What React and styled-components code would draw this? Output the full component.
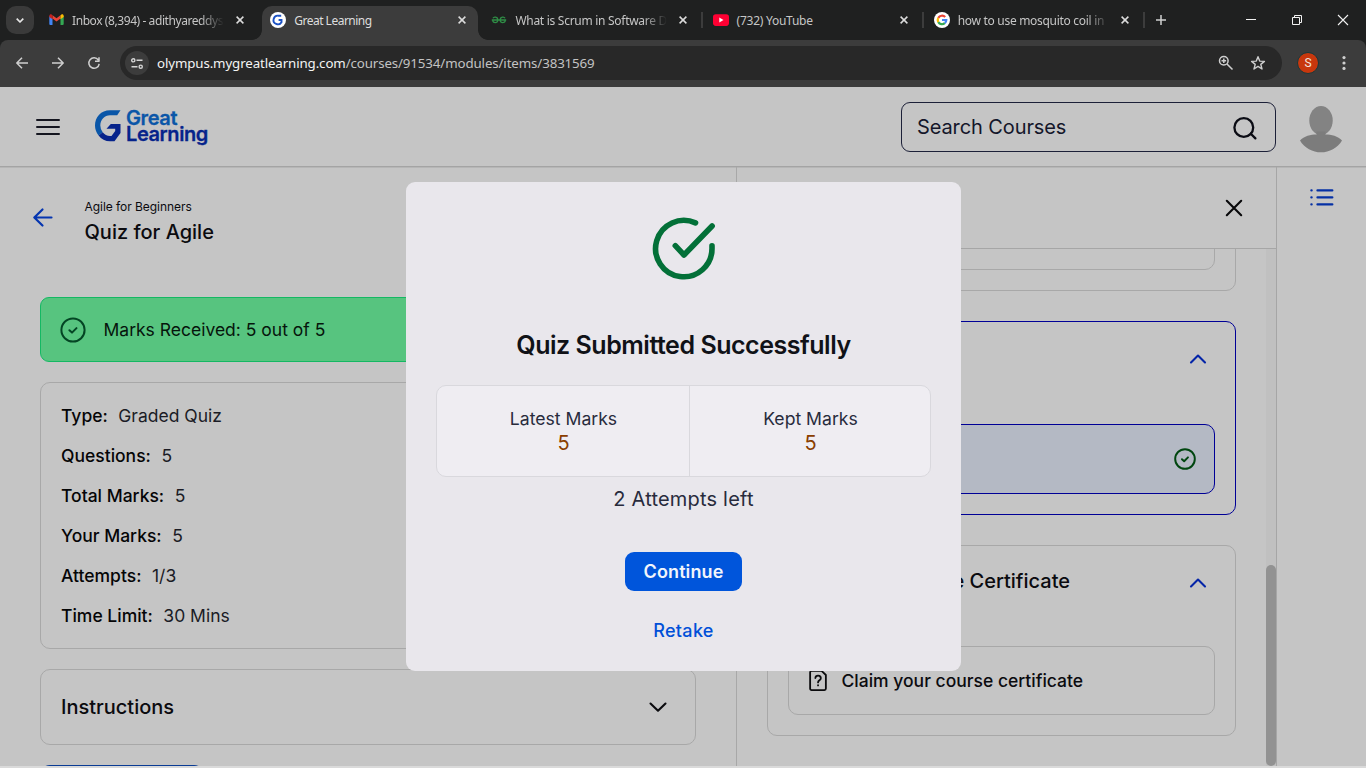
import React from "react";
import styled, { createGlobalStyle, css } from "styled-components";

const Global = createGlobalStyle`
  * { box-sizing: border-box; }
  html, body { margin: 0; width: 1366px; height: 768px; overflow: hidden; background: #c5c5c5; }
  body { font-family: Inter, "Liberation Sans", sans-serif; color: #0b0b0f; }
  svg { display: block; flex: none; overflow: visible; }
  button { font: inherit; border: 0; padding: 0; background: none; }
  p, h1, h2 { margin: 0; font-weight: inherit; }
`;

const Screen = styled.div`
  width: 1366px;
  height: 768px;
  display: flex;
  flex-direction: column;
  overflow: hidden;
  position: relative;
`;

/* ---------- browser chrome ---------- */

const TabStrip = styled.div`
  height: 40px;
  flex: none;
  display: flex;
  align-items: stretch;
  padding: 0 0 0 6px;
  background: #1f2020;
  font-family: "Noto Sans", "Open Sans", sans-serif;
`;

const TabSearch = styled.button`
  width: 28px;
  height: 28px;
  margin: 6px 7px 0 0;
  border-radius: 10px;
  background: #3a3a3a;
  display: flex;
  align-items: center;
  justify-content: center;
`;

const Tab = styled.div`
  position: relative;
  width: 221.2px;
  flex: none;
  display: flex;
  align-items: center;
  padding: 0 0 0 8px;
  ${(p) =>
    p.$active &&
    css`
      z-index: 0;
      &::before {
        content: "";
        position: absolute;
        z-index: -1;
        left: 0;
        top: 6px;
        width: 216px;
        height: 34px;
        border-radius: 10px 10px 0 0;
        background: #3c3c3c;
      }
      &::after {
        content: "";
        position: absolute;
        z-index: -1;
        left: -10px;
        bottom: 0;
        width: 236px;
        height: 10px;
        background: radial-gradient(circle at 0 0, transparent 9.5px, #3c3c3c 10.2px) left / 10px 10px no-repeat,
          radial-gradient(circle at 100% 0, transparent 9.5px, #3c3c3c 10.2px) right / 10px 10px no-repeat;
      }
    `}
`;

const TabTitle = styled.span`
  width: 151.5px;
  margin: 1px 0 0 8px;
  white-space: nowrap;
  font-size: 12px;
  line-height: 18px;
  letter-spacing: ${(p) => p.$ls || 0}px;
  color: ${(p) => (p.$active ? "#dedede" : "#c6c6c6")};
  ${(p) => p.$fade && "mask-image: linear-gradient(90deg, #000 128px, transparent 152px);"}
`;

const TabClose = styled.span`
  margin-left: 12px;
`;

const Separator = styled.span`
  width: 2px;
  height: 16px;
  margin-left: auto;
  margin-right: 2px;
  background: #3c3c3c;
`;

const NewTab = styled.button`
  width: 28px;
  display: flex;
  align-items: center;
  justify-content: center;
`;

const WindowControls = styled.div`
  margin-left: auto;
  display: flex;
`;

const WindowButton = styled.button`
  width: 46px;
  display: flex;
  align-items: center;
  justify-content: center;
`;

const ToolbarBack = styled.div`
  height: 47px;
  flex: none;
  background: #1f2020;
`;

const Toolbar = styled.div`
  height: 47px;
  display: flex;
  align-items: center;
  padding: 0 12px 1px 12px;
  border-radius: 8px 8px 0 0;
  background: #3c3c3c;
`;

const NavButton = styled.button`
  width: 20px;
  height: 20px;
  margin-right: 16px;
  display: flex;
  align-items: center;
  justify-content: center;
`;

const Omnibox = styled.div`
  width: 1162px;
  height: 34px;
  display: flex;
  align-items: center;
  padding: 0 16px 0 5px;
  border-radius: 17px;
  background: #282828;
`;

const SiteInfo = styled.span`
  width: 24px;
  height: 24px;
  border-radius: 50%;
  background: #3c3c3c;
  display: flex;
  align-items: center;
  justify-content: center;
`;

const Url = styled.span`
  flex: 1;
  margin-left: 8px;
  font: 13.3px/20px "Noto Sans", "Open Sans", sans-serif;
  letter-spacing: -0.115px;
  color: #c3c3c3;
  b { font-weight: 400; color: #f4f4f4; }
`;

const OmniIcons = styled.div`
  display: flex;
  gap: 16px;
`;

const Profile = styled.span`
  width: 22px;
  height: 22px;
  margin: 0 23px 0 15px;
  border-radius: 50%;
  border: 1px solid #17393c;
  background: #c8370d;
  color: #f4e4de;
  font: 12px/20px Roboto, sans-serif;
  text-align: center;
`;

/* ---------- site ---------- */

const SiteHeader = styled.header`
  height: 80px;
  flex: none;
  display: flex;
  align-items: center;
  padding: 1px 24px 0 36px;
  border-bottom: 1px solid #a4a4a4;
  box-shadow: 0 1px #b6b6b6;
`;

const Logo = styled.div`
  display: flex;
  margin: -2px 0 0 35px;
  align-items: flex-start;
`;

const LogoWords = styled.div`
  display: flex;
  flex-direction: column;
  margin-left: 4px;
  font-weight: 600;
  font-size: 20px;
  line-height: 16.5px;
  color: #06238b;
  letter-spacing: -0.4px;
  -webkit-text-stroke: 0.3px currentColor;
  span:first-child { color: #0a56a8; }
`;

const SearchBox = styled.div`
  width: 375px;
  height: 50px;
  margin-left: auto;
  padding: 0 18px 0 15px;
  display: flex;
  align-items: center;
  justify-content: space-between;
  border: 1px solid #1c2038;
  border-radius: 9px;
  font-size: 20px;
  letter-spacing: -0.1px;
  color: #14162a;
`;

const Avatar = styled.span`
  margin: 4px 0 0 24px;
`;

const Body = styled.div`
  height: 599px;
  flex: none;
  display: flex;
  overflow: hidden;
`;

const BottomEdge = styled.div`
  height: 2px;
  flex: none;
  background: #dadada;
`;

const Main = styled.main`
  width: 736px;
  padding: 0 40px;
`;

const PageHead = styled.div`
  height: 130px;
  display: flex;
  padding: 29px 0 0;
  margin-left: -7px;
`;

const BackArrow = styled.span`
  width: 20px;
  margin: 12px 31.5px 0 0;
`;

const Crumb = styled.p`
  margin-top: 1px;
  font-size: 12px;
  line-height: 20px;
  letter-spacing: -0.05px;
`;

const PageTitle = styled.h1`
  font-size: 20px;
  line-height: 30px;
  font-weight: 500;
`;

const Banner = styled.div`
  height: 65px;
  display: flex;
  align-items: center;
  gap: 17.5px;
  padding: 0 19px;
  border: 1px solid #14b863;
  border-radius: 9px;
  background: #57c47f;
  font-size: 17.5px;
  color: #06150c;
`;

const Card = styled.section`
  border: 1px solid ${(p) => (p.$blue ? "#000096" : "#a8a8a8")};
  border-radius: 10px;
`;

const InfoCard = styled(Card)`
  height: 267px;
  margin-top: 20px;
  padding: 12px 20px;
`;

const InfoRow = styled.div`
  height: 40px;
  display: flex;
  align-items: center;
  gap: 10.5px;
  font-size: 17.5px;
  color: #1b1c25;
  b { font-weight: 500; color: #050507; }
`;

const Accordion = styled(Card)`
  height: 76px;
  margin-top: 20px;
  padding: 0 28px 0 20px;
  display: flex;
  align-items: center;
  justify-content: space-between;
  font-size: 20px;
  font-weight: 500;
`;

const StartButton = styled.div`
  width: 164px;
  height: 40px;
  margin-top: 20px;
  border-radius: 10px;
  background: #0a3c94;
`;

const Sidebar = styled.aside`
  width: 540px;
  display: flex;
  flex-direction: column;
  border-left: 1px solid #a8a8a8;
`;

const SidebarHead = styled.div`
  height: 82px;
  flex: none;
  display: flex;
  justify-content: flex-end;
  padding: 33px 34px 0 0;
  border-bottom: 1px solid #a6a6a6;
`;

const SidebarScroll = styled.div`
  height: 517px;
  display: flex;
  overflow: hidden;
`;

const Modules = styled.div`
  width: 529px;
  padding: 0 30px 0 30px;
`;

const Module = styled(Card)`
  height: ${(p) => p.$h}px;
  margin-top: ${(p) => p.$mt}px;
  padding: 0 20px 20px;
  display: flex;
  flex-direction: column;
  justify-content: space-between;
`;

const ModuleHead = styled.div`
  display: flex;
  align-items: center;
  justify-content: space-between;
  height: 30px;
  margin-top: 22px;
  padding-right: 9px;
`;

const ModuleTitle = styled.h2`
  width: 282px;
  margin-top: -4px;
  text-align: right;
  font-size: 20px;
  line-height: 28px;
  font-weight: 500;
`;

const Item = styled(Card)`
  height: ${(p) => p.$h || 69}px;
  display: flex;
  align-items: center;
  padding: 0 18px 0 20px;
  gap: 14.5px;
  font-size: 17.5px;
  font-weight: 500;
  justify-content: ${(p) => (p.$blue ? "flex-end" : "flex-start")};
  background: ${(p) => (p.$blue ? "#b4b9c4" : "transparent")};
`;

const Track = styled.div`
  width: 10px;
  display: flex;
  align-items: flex-end;
  background: #c0c0c0;
`;

const Thumb = styled.div`
  width: 10px;
  height: 201px;
  border-radius: 5px;
  background: #929292;
`;

const Rail = styled.div`
  flex: 1;
  border-left: 1px solid #a6a6a6;
  padding: 21px 0 0 33px;
`;

/* ---------- dialog ---------- */

const Dialog = styled.div`
  position: absolute;
  left: 406px;
  top: 182px;
  width: 555px;
  height: 489px;
  padding: 35px 30px 0;
  display: flex;
  flex-direction: column;
  align-items: center;
  border-radius: 9px;
  background: #e9e7ec;
  color: #282b3c;
`;

const DialogTitle = styled.h2`
  margin-top: 46px;
  font-size: 25px;
  line-height: 38px;
  font-weight: 600;
  letter-spacing: -0.47px;
  color: #101217;
`;

const Marks = styled.div`
  width: 495px;
  height: 92px;
  margin-top: 21px;
  display: flex;
  border: 1px solid #d9d8dd;
  border-radius: 10px;
  background: #efedf2;
`;

const Mark = styled.div`
  width: ${(p) => p.$w}px;
  padding: 21px 0 0 1px;
  display: flex;
  flex-direction: column;
  align-items: center;
  font-size: 17.6px;
  line-height: 24px;
  & + & { border-left: 1px solid #d9d8dd; }
  strong { font-weight: 400; font-size: 20px; color: #8a3d00; }
`;

const Attempts = styled.p`
  margin-top: 7px;
  font-size: 20px;
  line-height: 30px;
  letter-spacing: 0.2px;
`;

const Continue = styled.button`
  width: 117px;
  height: 39px;
  margin-top: 38px;
  border-radius: 9px;
  background: #0055db;
  color: #f2f5fb;
  font-size: 18px;
  font-weight: 600;
  letter-spacing: 0.1px;
`;

const Retake = styled.button`
  margin-top: 26px;
  font-size: 18px;
  line-height: 28px;
  font-weight: 500;
  letter-spacing: 0.3px;
  color: #0050d8;
`;

/* ---------- drawings ---------- */

const Stroke = ({ w, h = w, d, color, sw = 2, cap = "round", children }) => (
  <svg width={w} height={h} viewBox={`0 0 ${w} ${h}`} fill="none" stroke={color} strokeWidth={sw} strokeLinecap={cap} strokeLinejoin="round">
    {d && <path d={d} />}
    {children}
  </svg>
);

const CloseMark = () => (
  <TabClose>
    <Stroke w={8} d="M.6.6 7.4 7.4M7.4.6.6 7.4" color="#dcdcdc" sw={1.5} cap="butt" />
  </TabClose>
);

const GmailIcon = () => (
  <svg width="15" height="16" viewBox="0 0 15 16">
    <path d="M.3 4v8.1c0 .5.4.9.9.9h2.3V6.2z" fill="#4285f4" />
    <path d="M11.5 6.2V13h2.3c.5 0 .9-.4.9-.9V4z" fill="#34a853" />
    <path d="M3.5 6.5V3.2l4 3 4-3v3.3l-4 3z" fill="#ea4335" />
    <path d="M.3 4v1l3.2 2.3V3.2l-.7-.5C1.7 1.9.3 2.6.3 4z" fill="#c5221f" />
    <path d="M14.7 4v1l-3.2 2.3V3.2l.7-.5c1.1-.8 2.5-.1 2.5 1.3z" fill="#fbbc04" />
  </svg>
);

const GLIcon = () => (
  <svg width="16" height="16" viewBox="0 0 16 16">
    <circle cx="8" cy="8" r="8" fill="#fff" />
    <path d="M11.2 3.7H8.3a4.3 4.3 0 1 0 3.2 6.5V8H8.6" fill="none" stroke="#1c52c4" strokeWidth="1.9" />
  </svg>
);

const GfgIcon = () => (
  <svg width="16" height="16" viewBox="0 0 16 16" fill="none" stroke="#2f8d46" strokeWidth="1.3">
    <path d="M.8 8h14.4M2 6.2C2.7 4.6 6.8 4.3 6.8 8S2 11.5 1.6 8M14 6.2C13.3 4.6 9.2 4.3 9.2 8s4.8 3.5 5.2 0" />
  </svg>
);

const YoutubeIcon = () => (
  <svg width="16" height="16" viewBox="0 0 16 16">
    <rect y="2.3" width="16" height="11.6" rx="2.8" fill="#ff0033" />
    <path d="M6.3 5.6v5l4.2-2.5z" fill="#fff" />
  </svg>
);

const GoogleIcon = () => (
  <svg width="16" height="16" viewBox="0 0 16 16" fill="none" strokeWidth="2.2">
    <circle cx="8" cy="8" r="8" fill="#fff" />
    <path d="M4.3 5.9A4.3 4.3 0 0 1 11.2 5.1" stroke="#ea4335" />
    <path d="M4.3 10.1A4.3 4.3 0 0 1 4.3 5.9" stroke="#fbbc04" />
    <path d="M10.8 11.2A4.3 4.3 0 0 1 4.3 10.1" stroke="#34a853" />
    <path d="M8 8h4.3a4.3 4.3 0 0 1-1.5 3.2" stroke="#4285f4" />
  </svg>
);

const GreatLogo = () => (
  <svg width="27" height="32" viewBox="0 0 27 32">
    <path d="M25.5.2H15C6 .2 0 7 0 15.6c0 3.8 1.3 7.2 3.6 9.8l4.1-3.2A10.4 10.4 0 0 1 5.3 15.6C5.3 9.8 9.5 5.3 15 5.3h7.2z" fill="#0a56a8" />
    <path d="M3.6 25.4C6.3 29 10.4 31.2 15 31.2h4.5l6-8.2v-9H15.8l-4.3 4.8h8.7v2.3L16.5 26H15c-3 0-5.5-1.4-7.3-3.8z" fill="#06238b" />
  </svg>
);

const UserShape = () => (
  <svg width="42" height="47" viewBox="0 0 43 48" preserveAspectRatio="none">
    <ellipse cx="21.5" cy="14.8" rx="12" ry="14.8" fill="#838383" />
    <path d="M17 26h9v3c6 0 13 1.5 17 6.2C38.5 43 30 47.3 21.5 47.3S4.5 43 0 35.2C4 30.5 11 29 17 29z" fill="#7c7c7c" />
  </svg>
);

const CircleCheck = ({ size, color, sw }) => (
  <svg width={size} height={size} viewBox="0 0 26 26" fill="none" stroke={color} strokeWidth={sw} strokeLinecap="round" strokeLinejoin="round">
    <circle cx="13" cy="13" r="11.6" />
    <path d="M9.4 13.2l2.6 2.4 4.5-4.5" />
  </svg>
);

const SuccessIcon = () => (
  <svg width="63" height="63" viewBox="0 0 63 63" fill="none" stroke="#037038" strokeWidth="5.6" strokeLinecap="round" strokeLinejoin="round">
    <path d="M60 28.7v2.6A28.2 28.2 0 1 1 43.5 5.9" />
    <path d="M23.3 28.7l8.7 9.3L60.1 9" />
  </svg>
);

const ListIcon = () => (
  <svg width="24" height="18" viewBox="0 0 24 18" stroke="#0530a5" strokeWidth="2.3" strokeLinecap="round">
    <path d="M7.5 2.4h14.8M7.5 9.4h14.8M7.5 16.4h14.8M1.4 2.4h.2M1.4 9.4h.2M1.4 16.4h.2" />
  </svg>
);

const FileQuestion = () => (
  <svg width="18" height="21" viewBox="0 0 18.5 22" fill="none" stroke="#0b0b0d" strokeWidth="1.9" strokeLinecap="round" strokeLinejoin="round">
    <path d="M1 2.5C1 1.5 1.7 1 2.5 1H13l4.5 4.2v14.3c0 .9-.6 1.5-1.5 1.5H2.5C1.6 21 1 20.4 1 19.5z" />
    <path d="M6.5 8.4c.3-3.4 5.7-3.2 5.7.2 0 2.2-2.9 2.2-2.9 4.4M9.3 16v.2" />
  </svg>
);

const tabs = [
  { icon: <GmailIcon />, title: "Inbox (8,394) - adithyareddys", fade: true, ls: -0.42 },
  { icon: <GLIcon />, title: "Great Learning", active: true, ls: -0.5 },
  { icon: <GfgIcon />, title: "What is Scrum in Software D", fade: true, sep: true, ls: -0.28 },
  { icon: <YoutubeIcon />, title: "(732) YouTube", sep: true, ls: -0.25 },
  { icon: <GoogleIcon />, title: "how to use mosquito coil in", fade: true, sep: true, ls: -0.3 },
];

const details = [
  ["Type:", "Graded Quiz"],
  ["Questions:", "5"],
  ["Total Marks:", "5"],
  ["Your Marks:", "5"],
  ["Attempts:", "1/3"],
  ["Time Limit:", "30 Mins"],
];

const ChevronUp = () => <Stroke w={16} h={10} d="M1 8.5 8 1.5l7 7" color="#0424a8" sw={2.1} />;

export default function App() {
  return (
    <Screen>
      <Global />
      <TabStrip>
        <TabSearch>
          <Stroke w={8} h={5} d="M.7.7 4 4 7.3.7" color="#e6e6e6" sw={1.7} cap="butt" />
        </TabSearch>
        {tabs.map((t) => (
          <Tab key={t.title} $active={t.active}>
            {t.icon}
            <TabTitle $active={t.active} $fade={t.fade} $ls={t.ls}>{t.title}</TabTitle>
            <CloseMark />
            {t.sep && <Separator />}
          </Tab>
        ))}
        <NewTab>
          <Stroke w={10} d="M5 0v10M0 5h10" color="#cfcfcf" sw={1.5} cap="butt" />
        </NewTab>
        <WindowControls>
          <WindowButton>
            <Stroke w={10} d="M0 4.5h10" color="#f2f2f2" sw={1} cap="butt" />
          </WindowButton>
          <WindowButton>
            <Stroke w={10} d="M.5 2.5h7v7h-7zM2.5 2.5v-2h7v7h-2" color="#f2f2f2" sw={1} cap="butt" />
          </WindowButton>
          <WindowButton>
            <Stroke w={10} d="M0 0l10 10M10 0 0 10" color="#f2f2f2" sw={1.1} cap="butt" />
          </WindowButton>
        </WindowControls>
      </TabStrip>
      <ToolbarBack>
        <Toolbar>
          <NavButton>
            <Stroke w={12} d="M12 6H1M6 .7.8 6 6 11.3" color="#cfcfcf" sw={1.5} cap="butt" />
          </NavButton>
          <NavButton>
            <Stroke w={12} d="M0 6h11M6 .7 11.2 6 6 11.3" color="#cfcfcf" sw={1.5} cap="butt" />
          </NavButton>
          <NavButton>
            <Stroke w={12} d="M10.3 3A5.2 5.2 0 1 0 11.2 6.8M11 .3V4.3H7" color="#cfcfcf" sw={1.5} cap="butt" />
          </NavButton>
          <Omnibox>
            <SiteInfo>
              <Stroke w={12} h={11} d="M5.5 2.3H11.5M.5 8.7h6" color="#d6d6d6" sw={1.4} cap="butt">
                <circle cx="2.3" cy="2.3" r="1.6" />
                <circle cx="9.7" cy="8.7" r="1.6" />
              </Stroke>
            </SiteInfo>
            <Url><b>olympus.mygreatlearning.com</b>/courses/91534/modules/items/3831569</Url>
            <OmniIcons>
              <Stroke w={16} d="M9 9l5.500 5.500M3.500 5.800h4.600M5.800 3.500v4.600" color="#cfcfcf" sw={1.5} cap="butt">
                <circle cx="5.8" cy="5.8" r="4.3" />
              </Stroke>
              <Stroke w={16} d="M8 1.7l1.7 4.4 4.7.3-3.6 3 1.2 4.6L8 11.4 4 14l1.2-4.6-3.6-3 4.7-.3z" color="#cfcfcf" sw={1.4} cap="butt" />
            </OmniIcons>
          </Omnibox>
          <Profile>S</Profile>
          <svg width="4" height="14" viewBox="0 0 4 14" fill="#cfcfcf">
            <circle cx="2" cy="1.6" r="1.6" /><circle cx="2" cy="7" r="1.6" /><circle cx="2" cy="12.4" r="1.6" />
          </svg>
        </Toolbar>
      </ToolbarBack>

      <SiteHeader>
        <Stroke w={24} h={18} d="M1 2h22M1 9h22M1 16h22" color="#14151f" sw={2} />
        <Logo>
          <GreatLogo />
          <LogoWords><span>Great</span><span>Learning</span></LogoWords>
        </Logo>
        <SearchBox>
          <span>Search Courses</span>
          <Stroke w={24} d="M17.8 18.8l4.600 4.600" color="#0b0c14" sw={2.3}>
            <circle cx="10.8" cy="12.5" r="9.4" />
          </Stroke>
        </SearchBox>
        <Avatar><UserShape /></Avatar>
      </SiteHeader>

      <Body>
        <Main>
          <PageHead>
            <BackArrow>
              <Stroke w={20} h={19} d="M18.5 9.5H1.5M9.5 1.5 1.3 9.5l8.2 8" color="#0535b0" sw={2.2} />
            </BackArrow>
            <div>
              <Crumb>Agile for Beginners</Crumb>
              <PageTitle>Quiz for Agile</PageTitle>
            </div>
          </PageHead>
          <Banner>
            <CircleCheck size={26} color="#044524" sw={2} />
            <span>Marks Received: 5 out of 5</span>
          </Banner>
          <InfoCard>
            {details.map(([k, v]) => (
              <InfoRow key={k}><b>{k}</b><span>{v}</span></InfoRow>
            ))}
          </InfoCard>
          <Accordion>
            <span>Instructions</span>
            <Stroke w={18} h={10} d="M1.5 1.5 9 8.7l7.5-7.2" color="#0b0b0f" sw={2.1} />
          </Accordion>
          <StartButton />
        </Main>

        <Sidebar>
          <SidebarHead>
            <Stroke w={16} d="M.8.8l14.4 14.4M15.2.8.8 15.2" color="#08080a" sw={2.1} />
          </SidebarHead>
          <SidebarScroll>
            <Modules>
              <Module $h={100} $mt={-58}><span /><Item /></Module>
              <Module $h={194} $mt={30} $blue>
                <ModuleHead><span /><ChevronUp /></ModuleHead>
                <Item $blue $h={70}><CircleCheck size={22} color="#00460f" sw={2.3} /></Item>
              </Module>
              <Module $h={191} $mt={30}>
                <ModuleHead><ModuleTitle>Course Certificate</ModuleTitle><ChevronUp /></ModuleHead>
                <Item><FileQuestion /><span>Claim your course certificate</span></Item>
              </Module>
            </Modules>
            <Track><Thumb /></Track>
          </SidebarScroll>
        </Sidebar>
        <Rail><ListIcon /></Rail>
      </Body>
      <BottomEdge />

      <Dialog>
        <SuccessIcon />
        <DialogTitle>Quiz Submitted Successfully</DialogTitle>
        <Marks>
          <Mark $w={252}><span>Latest Marks</span><strong>5</strong></Mark>
          <Mark $w={241}><span>Kept Marks</span><strong>5</strong></Mark>
        </Marks>
        <Attempts>2 Attempts left</Attempts>
        <Continue>Continue</Continue>
        <Retake>Retake</Retake>
      </Dialog>
    </Screen>
  );
}
